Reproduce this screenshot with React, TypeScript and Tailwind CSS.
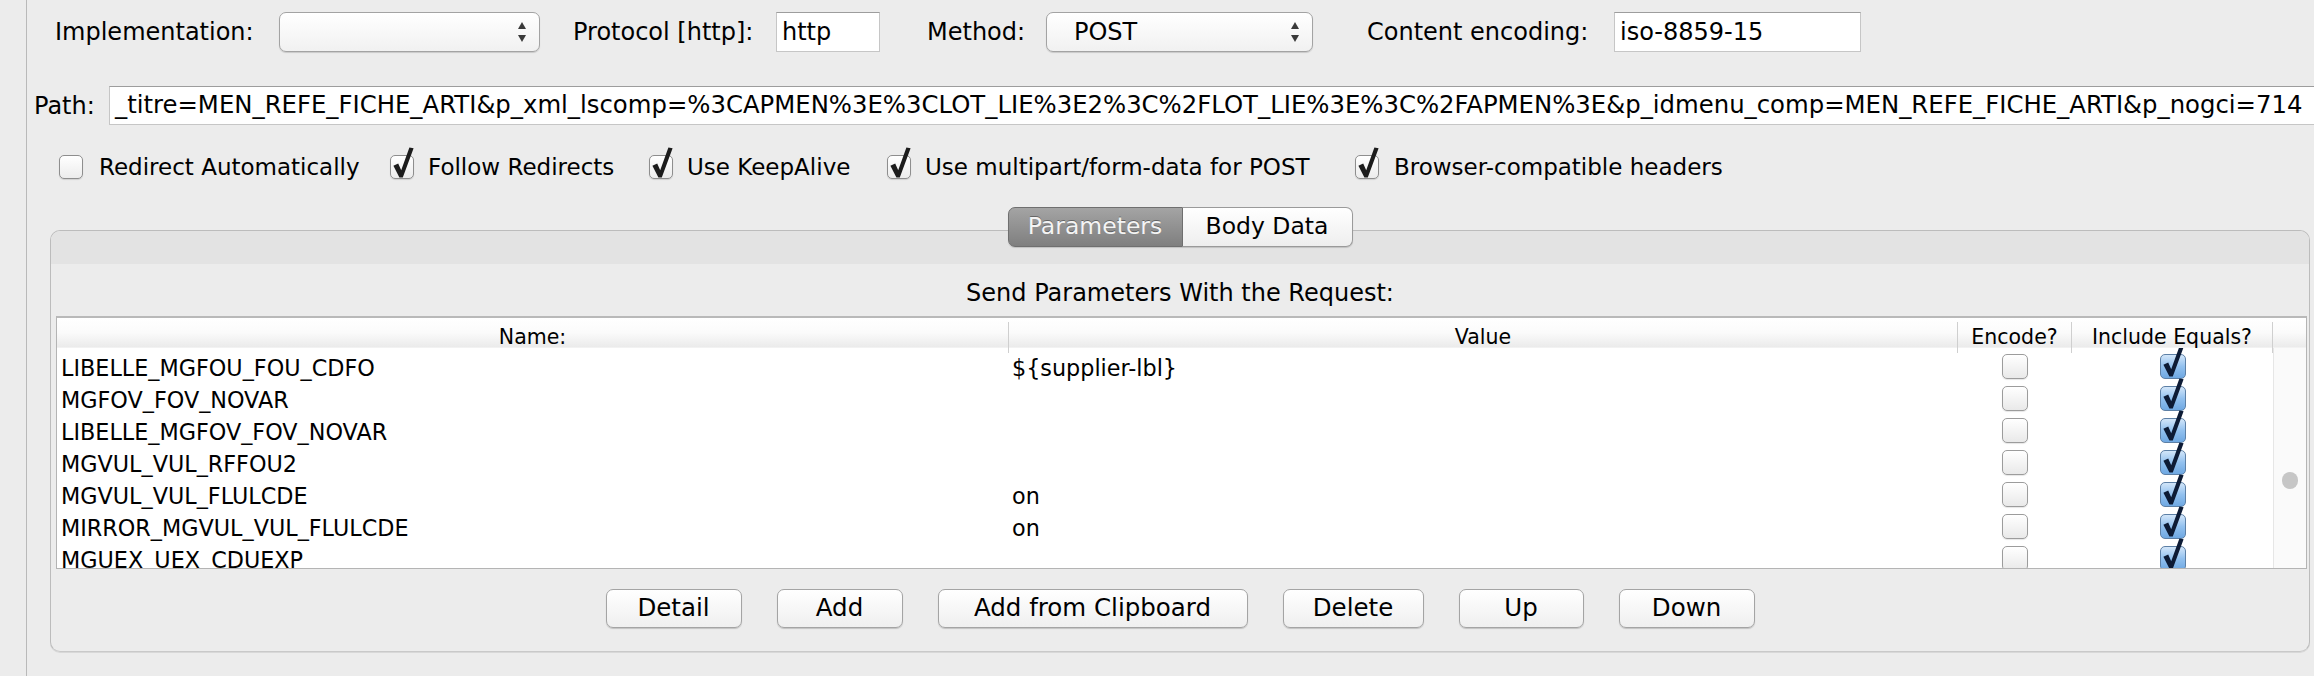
import React from "react";

const font = "font-['DejaVu_Sans',sans-serif]";

function CheckMark({ color }: { color: string }) {
  return (
    <svg viewBox="0 0 24 32" className="absolute left-0 top-[-8px] w-[24px] h-[32px] pointer-events-none">
      <path d="M3.4 18.8 L8.2 16.6 L11.2 23.2 L19.4 0.6 L23.6 1.2 L12.8 30.6 L9.4 30.6 Z" fill={color} />
    </svg>
  );
}

function MacCheck({ checked }: { checked: boolean }) {
  return (
    <div className="relative w-[24px] h-[24px] shrink-0">
      <div className="w-[24px] h-[24px] rounded-[5px] border border-[#8e8e8e] bg-gradient-to-b from-[#ffffff] to-[#ececec] shadow-[0_1px_1px_rgba(0,0,0,0.12)]" />
      {checked && <CheckMark color="#1c1c1c" />}
    </div>
  );
}

function CellCheck({ checked }: { checked: boolean }) {
  return (
    <div className="relative w-[26px] h-[25px] shrink-0 mt-[6px]">
      {checked ? (
        <div className="w-[26px] h-[25px] rounded-[5px] border border-[#5d80a6] bg-gradient-to-b from-[#d3e6f9] via-[#92c1ef] to-[#6fa8e2]" />
      ) : (
        <div className="w-[26px] h-[25px] rounded-[5px] border border-[#9c9c9c] bg-gradient-to-b from-[#ffffff] to-[#e9e9e9] shadow-[0_1px_1px_rgba(0,0,0,0.1)]" />
      )}
      {checked && <CheckMark color="#0d1b35" />}
    </div>
  );
}

function SelectArrows() {
  return (
    <svg viewBox="0 0 10 22" className="w-[10px] h-[22px]">
      <path d="M5 1 L9 8 L1 8 Z" fill="#3a3a3a" />
      <path d="M1 14 L9 14 L5 21 Z" fill="#3a3a3a" />
    </svg>
  );
}

function MacSelect({ w, value }: { w: string; value: string }) {
  return (
    <div
      className={`${w} h-[40px] shrink-0 flex items-center justify-between pl-[27px] pr-[12px] rounded-[7px] border border-[#a3a3a3] bg-gradient-to-b from-[#ffffff] to-[#f1f1f1] shadow-[0_1px_1px_rgba(0,0,0,0.15)] text-[24px] text-black`}
    >
      <span>{value}</span>
      <SelectArrows />
    </div>
  );
}

function TextField({ w, value }: { w: string; value: string }) {
  return (
    <div
      className={`${w} h-[40px] shrink-0 flex items-center pl-[5px] bg-white border border-[#c6c6c6] border-t-[#9d9d9d] text-[24px] text-black overflow-hidden whitespace-nowrap`}
    >
      {value}
    </div>
  );
}

function Button({ w, label }: { w: string; label: string }) {
  return (
    <div
      className={`${w} h-[39px] flex items-center justify-center rounded-[7px] border border-[#a4a4a4] bg-gradient-to-b from-[#ffffff] to-[#efefef] shadow-[0_1px_1px_rgba(0,0,0,0.18)] text-[24.5px] text-black`}
    >
      {label}
    </div>
  );
}

const rows: { name: string; value: string }[] = [
  { name: "LIBELLE_MGFOU_FOU_CDFO", value: "${supplier-lbl}" },
  { name: "MGFOV_FOV_NOVAR", value: "" },
  { name: "LIBELLE_MGFOV_FOV_NOVAR", value: "" },
  { name: "MGVUL_VUL_RFFOU2", value: "" },
  { name: "MGVUL_VUL_FLULCDE", value: "on" },
  { name: "MIRROR_MGVUL_VUL_FLULCDE", value: "on" },
  { name: "MGUEX_UEX_CDUEXP", value: "" },
];

const pathText =
  "_titre=MEN_REFE_FICHE_ARTI&p_xml_lscomp=%3CAPMEN%3E%3CLOT_LIE%3E2%3C%2FLOT_LIE%3E%3C%2FAPMEN%3E&p_idmenu_comp=MEN_REFE_FICHE_ARTI&p_nogci=714";

export default function App() {
  return (
    <div className={`w-[2314px] h-[676px] bg-[#ececec] flex overflow-hidden ${font} text-black`}>
      {/* left strip */}
      <div className="w-[27px] h-full shrink-0 border-r border-[#b9b9b9]" />

      <div className="flex-1 flex flex-col min-w-0 pt-[12px]">
        {/* Row 1 */}
        <div className="h-[40px] flex items-center pl-[28px] text-[24px]">
          <div className="w-[224px] shrink-0">Implementation:</div>
          <MacSelect w="w-[261px]" value="" />
          <div className="ml-[33px] w-[203px] shrink-0">Protocol [http]:</div>
          <TextField w="w-[104px]" value="http" />
          <div className="ml-[47px] w-[119px] shrink-0">Method:</div>
          <MacSelect w="w-[267px]" value="POST" />
          <div className="ml-[54px] w-[247px] shrink-0">Content encoding:</div>
          <TextField w="w-[247px]" value="iso-8859-15" />
        </div>

        {/* Row 2 Path */}
        <div className="mt-[34px] h-[39px] flex items-center pl-[7px] text-[24px]">
          <div className="w-[75px] shrink-0">Path:</div>
          <div className="flex-1 min-w-0 h-[39px] flex items-center pl-[5px] bg-white border border-[#c6c6c6] border-t-[#9d9d9d] border-r-0 overflow-hidden whitespace-nowrap text-[24.35px]">
            {pathText}
          </div>
        </div>

        {/* Row 3 checkboxes */}
        <div className="mt-[29px] h-[26px] flex items-center pl-[32px] text-[23px]">
          <div className="w-[331px] shrink-0 flex items-center gap-[16px]">
            <MacCheck checked={false} />
            <span>Redirect Automatically</span>
          </div>
          <div className="w-[259px] shrink-0 flex items-center gap-[14px]">
            <MacCheck checked={true} />
            <span>Follow Redirects</span>
          </div>
          <div className="w-[238px] shrink-0 flex items-center gap-[14px]">
            <MacCheck checked={true} />
            <span>Use KeepAlive</span>
          </div>
          <div className="w-[468px] shrink-0 flex items-center gap-[14px]">
            <MacCheck checked={true} />
            <span>Use multipart/form-data for POST</span>
          </div>
          <div className="shrink-0 flex items-center gap-[15px]">
            <MacCheck checked={true} />
            <span>Browser-compatible headers</span>
          </div>
        </div>

        {/* Tabs */}
        <div className="mt-[27px] h-[40px] flex justify-center pl-[23px] pr-[4px] relative z-10">
          <div className="flex h-[40px] rounded-[7px] shadow-[0_1px_1px_rgba(0,0,0,0.15)]">
            <div className="w-[175px] h-[40px] flex items-center justify-center rounded-l-[7px] border border-[#6f6f6f] bg-gradient-to-b from-[#a4a4a4] to-[#7f7f7f] text-[23.5px] text-[#f4f4f4] [text-shadow:0_-1px_0_rgba(0,0,0,0.35)]">
              Parameters
            </div>
            <div className="w-[170px] h-[40px] flex items-center justify-center rounded-r-[7px] border border-l-0 border-[#9a9a9a] bg-gradient-to-b from-[#ffffff] to-[#eeeeee] text-[23.5px] text-black">
              Body Data
            </div>
          </div>
        </div>

        {/* Panel */}
        <div className="-mt-[17px] ml-[23px] mr-[4px] h-[422px] rounded-[10px] border border-[#bcbcbc] border-b-[#c9c9c9] shadow-[0_1px_0_#d8d8d8] flex flex-col overflow-hidden">
          <div className="h-[33px] shrink-0 bg-[#e3e3e3]" />
          <div className="mt-[14px] h-[30px] flex items-center justify-center text-[24px]">
            Send Parameters With the Request:
          </div>

          {/* Table */}
          <div className="mt-[8px] ml-[5px] mr-[2px] h-[253px] border border-[#b4b4b4] border-t-2 border-t-[#b9b9b9] bg-white flex flex-col overflow-hidden">
            {/* header */}
            <div className="h-[30px] shrink-0 flex bg-gradient-to-b from-[#ffffff] via-[#fbfbfb] to-[#ebebeb] border-b border-[#f2f2f2] text-[20.5px]">
              <div className="grid grid-cols-[952px_949px_114px_201px] h-full">
                <div className="flex items-center justify-center border-r border-[#cfcfcf] my-[4px]">Name:</div>
                <div className="flex items-center justify-center border-r border-[#cfcfcf] my-[4px]">Value</div>
                <div className="flex items-center justify-center border-r border-[#cfcfcf] my-[4px]">Encode?</div>
                <div className="flex items-center justify-center border-r border-[#cfcfcf] my-[4px]">Include Equals?</div>
              </div>
              <div className="flex-1" />
            </div>
            {/* body */}
            <div className="flex-1 flex min-h-0">
              <div className="flex flex-col overflow-hidden">
                {rows.map((r, i) => (
                  <div key={i} className="h-[32px] shrink-0 grid grid-cols-[952px_949px_114px_201px] text-[22.3px]">
                    <div className="flex items-center pl-[4px] pt-[4px] whitespace-nowrap">{r.name}</div>
                    <div className="flex items-center pl-[3px] pt-[4px] whitespace-nowrap">{r.value}</div>
                    <div className="flex items-start justify-center">
                      <CellCheck checked={false} />
                    </div>
                    <div className="flex items-start justify-center">
                      <CellCheck checked={true} />
                    </div>
                  </div>
                ))}
              </div>
              <div className="flex-1 bg-[#fafafa] border-l border-[#e6e6e6] flex justify-center">
                <div className="mt-[124px] w-[16px] h-[17px] rounded-full bg-[#c6c6c6]" />
              </div>
            </div>
          </div>

          {/* Buttons */}
          <div className="mt-[20px] flex justify-center gap-[35px]">
            <Button w="w-[136px]" label="Detail" />
            <Button w="w-[126px]" label="Add" />
            <Button w="w-[310px]" label="Add from Clipboard" />
            <Button w="w-[141px]" label="Delete" />
            <Button w="w-[125px]" label="Up" />
            <Button w="w-[136px]" label="Down" />
          </div>
        </div>
      </div>
    </div>
  );
}
